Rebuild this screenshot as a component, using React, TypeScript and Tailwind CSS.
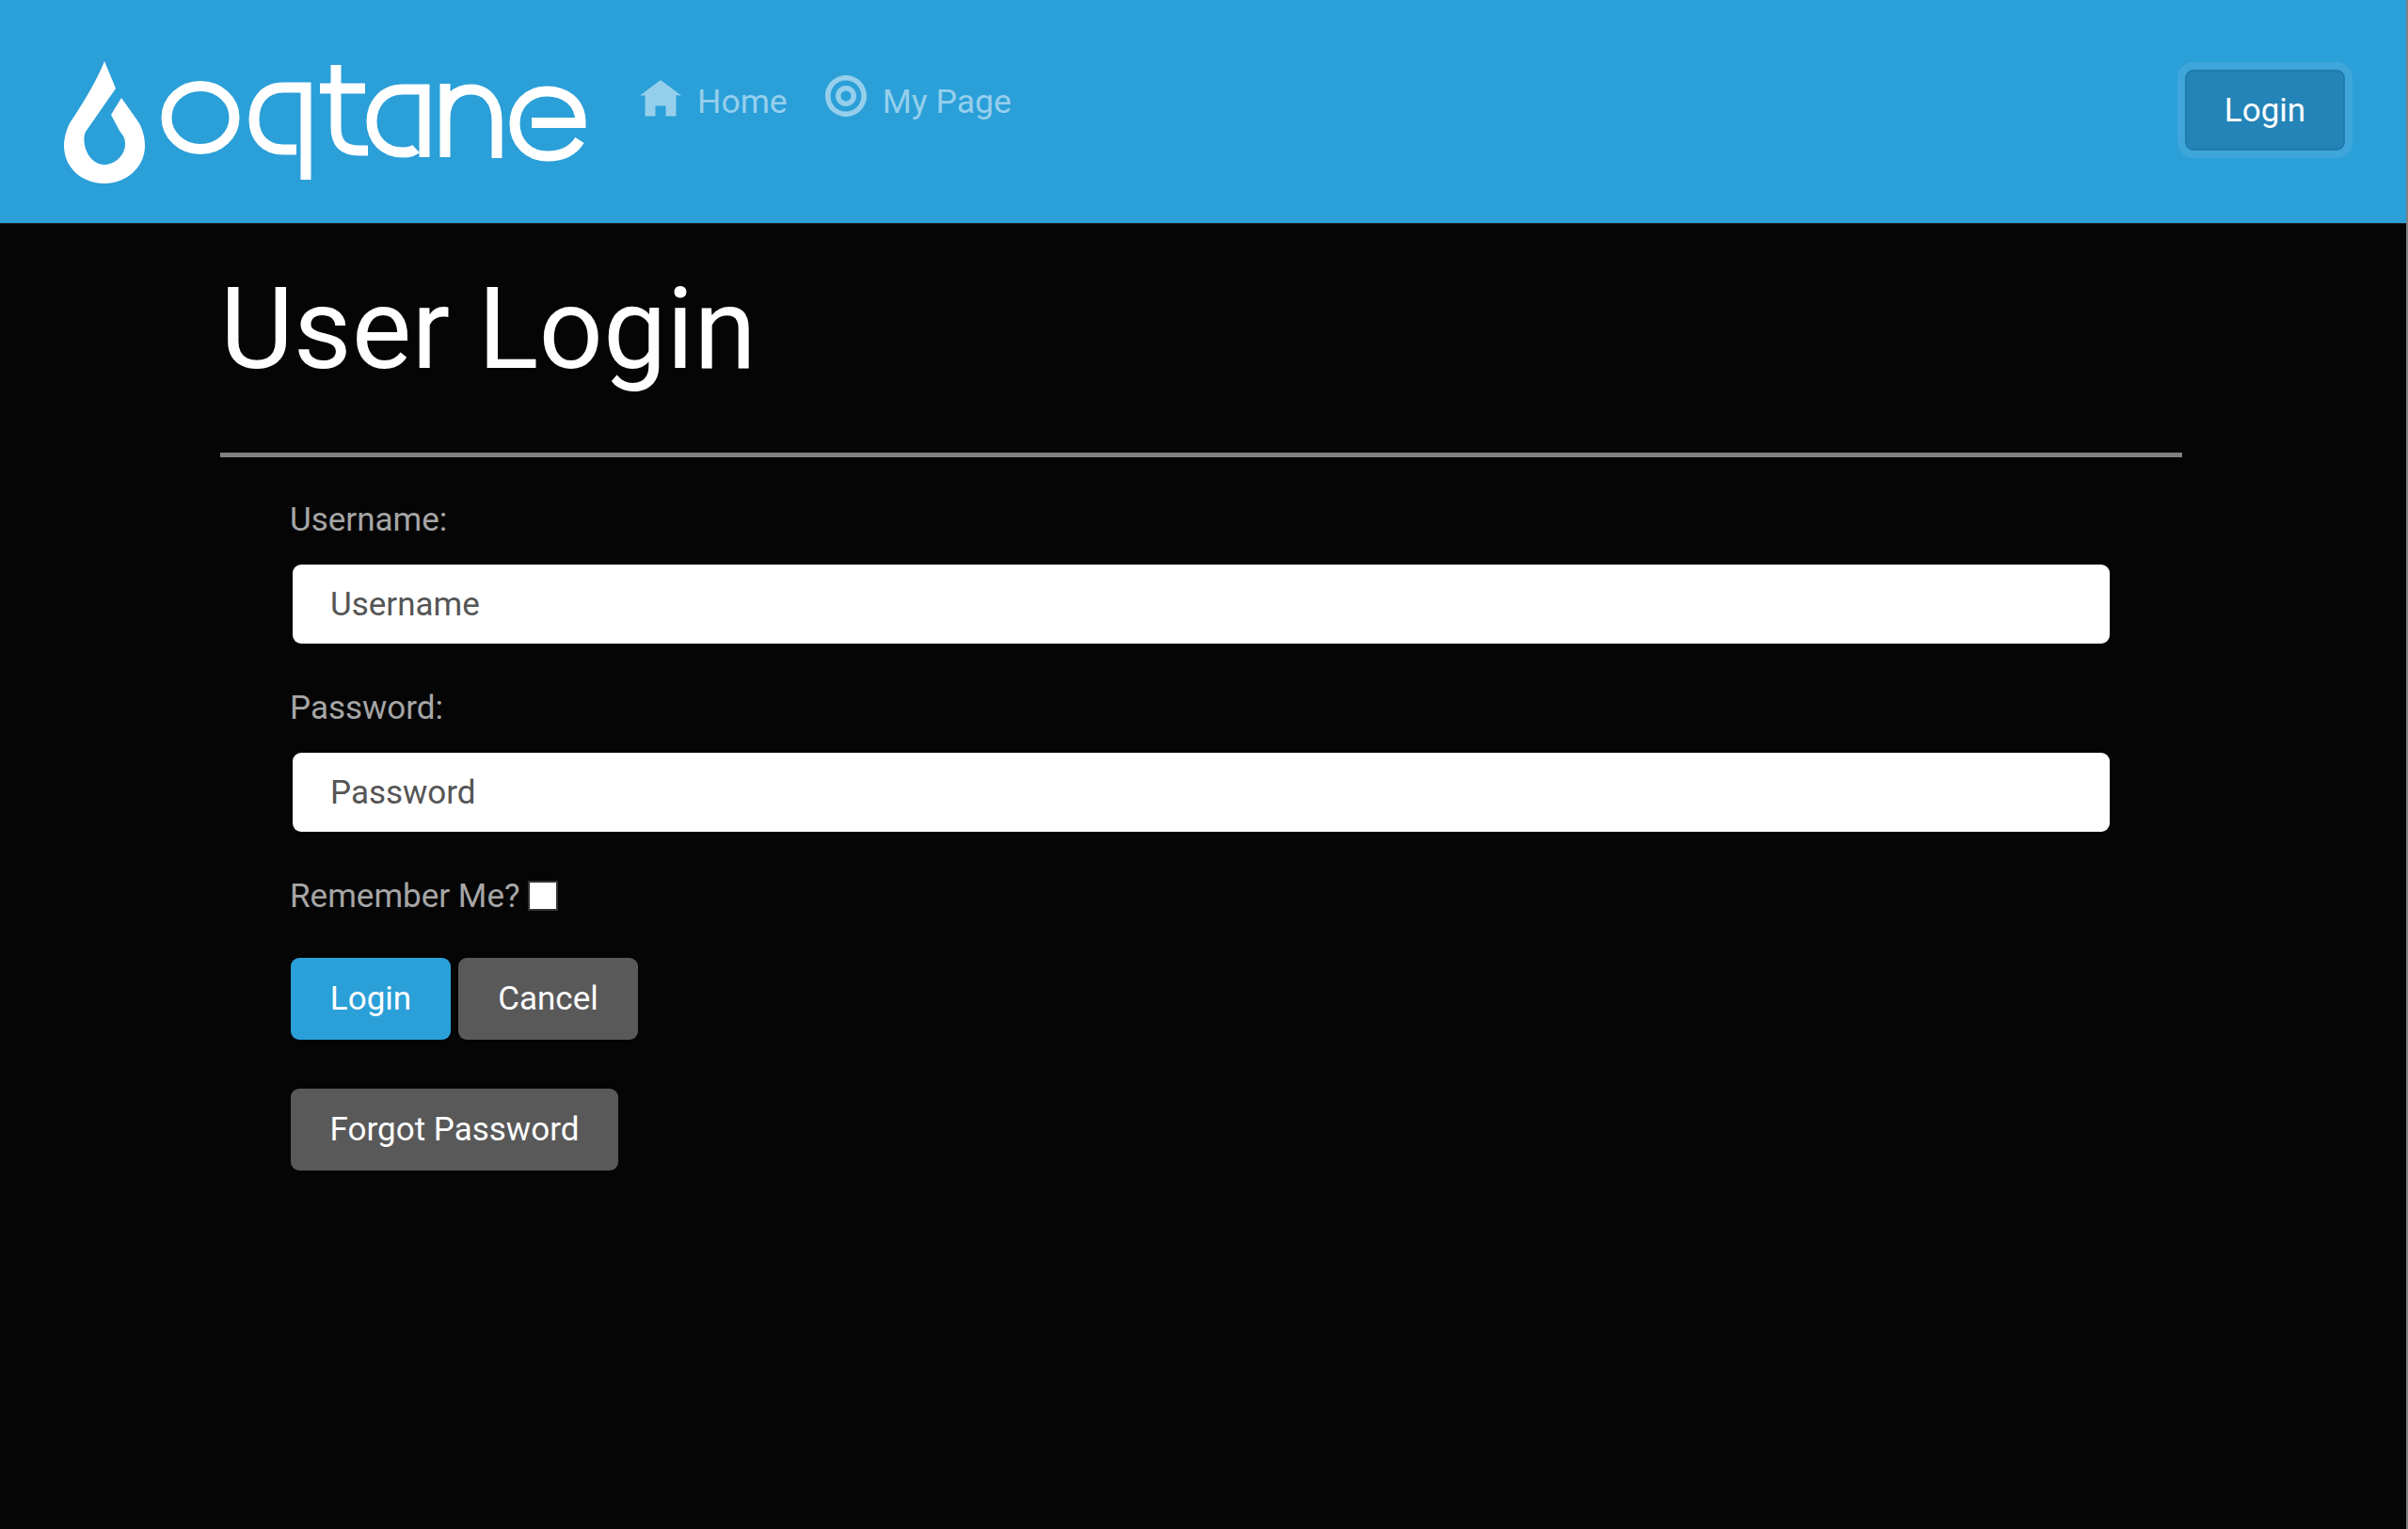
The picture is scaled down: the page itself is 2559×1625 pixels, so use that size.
import React from "react";

function Logo() {
  return (
    <svg width="600" height="150" viewBox="40 55 600 150" className="shrink-0" aria-label="oqtane">
      <path
        fill="#fff"
        d="M111 65 L123 94 L91 140 C88 146 90 155 91 158 C94 168 102 175 111 175 C122 175 133 165 133 153 C133 146 130 143 127 139 L118 122 L129 104 L146 128 C151 135 154 145 154 155 C154 178 134 195 111 195 C87 195 68 178 68 155 C68 145 72 132 78 125 C91 105 103 85 111 65Z"
      />
      <g fill="none" stroke="#fff" strokeWidth="11">
        <ellipse cx="213" cy="125" rx="36" ry="33.500" />
        <path d="M325 191 V93 H301 C279 93 270 110 270 127 C270 145 281 159 301 159 H315" />
        <path d="M357 69 V135 C357 152 364 160 382 160 H391 M340 94 H388" />
        <path d="M451 167 V95 H428 C406 95 395 112 395 129 C395 148 408 162 428 162 C435 162 439 161 442 158" />
        <path d="M473 89 V167 M473 125 C473 105 485 95 501 95 C517 95 528 108 528 128 V168" />
        <path d="M565 130.500 H617 C617 108 600 97 581 97 C560 97 547 113 547 131 C547 152 562 166 582 166 C597 166 609 160 616 149" />
      </g>
    </svg>
  );
}

function HomeIcon() {
  return (
    <svg width="44" height="44" viewBox="0 0 8 8" fill="currentColor" className="shrink-0 mt-[5px]">
      <path d="M4 0l-4 3h1v4h2v-2h2v2h2v-4.030l1 .03-4-3z" />
    </svg>
  );
}

function TargetIcon() {
  return (
    <svg width="44" height="44" viewBox="0 0 8 8" fill="currentColor" className="shrink-0">
      <path d="M4 0c-2.200 0-4 1.800-4 4s1.800 4 4 4 4-1.800 4-4-1.800-4-4-4zm0 1c1.660 0 3 1.340 3 3s-1.340 3-3 3-3-1.340-3-3 1.340-3 3-3zm0 1c-1.100 0-2 .9-2 2s.9 2 2 2 2-.9 2-2-.9-2-2-2zm0 1c.56 0 1 .44 1 1s-.44 1-1 1-1-.44-1-1 .44-1 1-1z" />
    </svg>
  );
}

function Field({ label, placeholder, type }: { label: string; placeholder: string; type: string }) {
  return (
    <div className="pt-[2px] mb-[40px]">
      <label className="block text-[#a6a6a6] leading-[54px] mb-[20px] -ml-[1px]">{label}</label>
      <input
        type={type}
        placeholder={placeholder}
        className="block w-[1931px] h-[84px] ml-[2px] px-[40px] bg-white rounded-[9px] text-[#555] placeholder:text-[#555] outline-none"
      />
    </div>
  );
}

export default function App() {
  return (
    <div className="min-h-[1625px] bg-[#050505] border-r-2 border-[#7f7f7f] text-[35px] font-['Roboto',sans-serif]">
      <header className="h-[238px] bg-[#2b9fd8] border-b border-[#222] flex items-start">
        <div className="ml-[40px] mt-[55px]">
          <Logo />
        </div>
        <nav className="flex items-start gap-[40px] ml-[40px] mt-[80px] text-[#95cfec] text-[35.600px]">
          <a className="flex items-start gap-[17px]">
            <HomeIcon />
            <span className="leading-[54px] mt-[1px]">Home</span>
          </a>
          <a className="flex items-start gap-[17px]">
            <TargetIcon />
            <span className="leading-[54px] mt-[1px]">My Page</span>
          </a>
        </nav>
        <button className="ml-auto mr-[65px] mt-[74px] w-[170px] h-[86px] pt-[2px] bg-[#2484b8] border-2 border-[#217aab] rounded-[9px] text-white ring-[8px] ring-[#3fa6dc]">
          Login
        </button>
      </header>

      <main className="pl-[234px]">
        <h1 className="text-white text-[120px] leading-[134px] pt-[45px] pb-[64px]">User Login</h1>
        <hr className="w-[2085px] h-[5px] bg-[#808080] border-0" />
        <div className="pl-[75px] pt-[38px]">
          <Field label="Username:" placeholder="Username" type="text" />
          <Field label="Password:" placeholder="Password" type="password" />
          <div className="flex items-start gap-[8px] text-[#a6a6a6] leading-[54px] -ml-[1px]">
            <span className="mt-[2px]">Remember Me?</span>
            <span className="w-[32px] h-[32px] mt-[12px] bg-white border-2 border-[#333]" />
          </div>
          <div className="flex gap-[8px] mt-[38px]">
            <button className="w-[170px] h-[87px] pt-[2px] bg-[#2b9fd8] rounded-[9px] text-white">Login</button>
            <button className="w-[191px] h-[87px] pt-[2px] bg-[#595959] rounded-[9px] text-white">Cancel</button>
          </div>
          <button className="block w-[348px] h-[87px] pt-[2px] mt-[52px] bg-[#595959] rounded-[9px] text-white">Forgot Password</button>
        </div>
      </main>
    </div>
  );
}
